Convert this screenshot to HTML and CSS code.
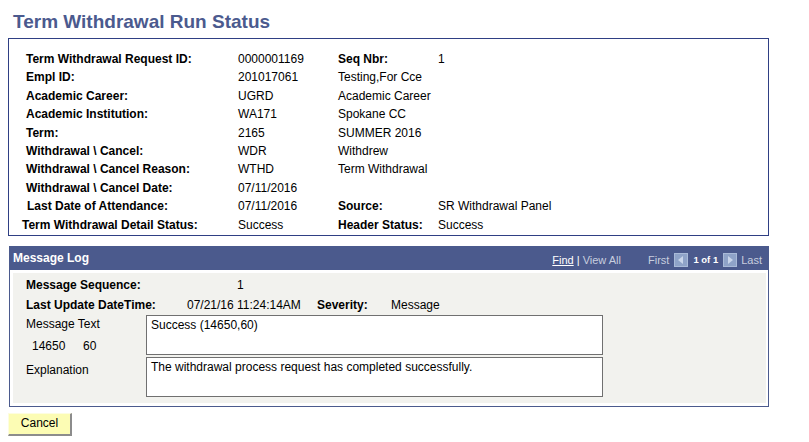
FILE: index.html
```html
<!DOCTYPE html>
<html>
<head>
<meta charset="utf-8">
<title>Term Withdrawal Run Status</title>
<link rel="stylesheet" href="styles.css">
</head>
<body>
<h1 class="title">Term Withdrawal Run Status</h1>

<div class="summary">
  <span class="lbl">Term Withdrawal Request ID:</span><span>0000001169</span><span class="lbl">Seq Nbr:</span><span>1</span>
  <span class="lbl">Empl ID:</span><span>201017061</span><span>Testing,For Cce</span><span></span>
  <span class="lbl">Academic Career:</span><span>UGRD</span><span>Academic Career</span><span></span>
  <span class="lbl">Academic Institution:</span><span>WA171</span><span>Spokane CC</span><span></span>
  <span class="lbl">Term:</span><span>2165</span><span>SUMMER 2016</span><span></span>
  <span class="lbl">Withdrawal \ Cancel:</span><span>WDR</span><span>Withdrew</span><span></span>
  <span class="lbl">Withdrawal \ Cancel Reason:</span><span>WTHD</span><span>Term Withdrawal</span><span></span>
  <span class="lbl">Withdrawal \ Cancel Date:</span><span>07/11/2016</span><span></span><span></span>
  <span class="lbl nudge-r">Last Date of Attendance:</span><span>07/11/2016</span><span class="lbl">Source:</span><span>SR Withdrawal Panel</span>
  <span class="lbl nudge-l">Term Withdrawal Detail Status:</span><span>Success</span><span class="lbl">Header Status:</span><span>Success</span>
</div>

<div class="log">
  <div class="log-head">
    <span class="log-title">Message Log</span>
    <div class="nav">
      <a class="nav-find">Find</a><span class="nav-sep">&nbsp;|&nbsp;</span><span class="nav-dim">View All</span>
      <span class="nav-dim nav-first">First</span>
      <svg class="nav-ico" width="14" height="14" viewBox="0 0 14 14"><rect x="0" y="0" width="14" height="14" fill="#8fa3c8"/><rect x="0.5" y="0.5" width="13" height="13" fill="none" stroke="#a9bad8"/><polygon points="9,3 4,7 9,11" fill="#c9d5ea"/></svg>
      <span class="nav-count">1 of 1</span>
      <svg class="nav-ico" width="14" height="14" viewBox="0 0 14 14"><rect x="0" y="0" width="14" height="14" fill="#8fa3c8"/><rect x="0.5" y="0.5" width="13" height="13" fill="none" stroke="#a9bad8"/><polygon points="5,3 10,7 5,11" fill="#c9d5ea"/></svg>
      <span class="nav-dim nav-last">Last</span>
    </div>
  </div>
  <div class="log-body">
    <div class="log-inner">
      <div class="row-seq">
        <span class="lbl">Message Sequence:</span><span>1</span>
      </div>
      <div class="row-upd">
        <span class="lbl">Last Update DateTime:</span><span>07/21/16 11:24:14AM</span><span class="lbl">Severity:</span><span>Message</span>
      </div>
      <div class="msg-grid">
        <div class="msg-side">
          <div class="side-line">Message Text</div>
          <div class="side-nums"><span class="num1">14650</span><span>60</span></div>
        </div>
        <div class="box">Success (14650,60)</div>
        <div class="msg-side expl">
          <div class="side-line">Explanation</div>
        </div>
        <div class="box">The withdrawal process request has completed successfully.</div>
      </div>
    </div>
  </div>
</div>

<div class="actions">
  <button class="btn" type="button">Cancel</button>
</div>
</body>
</html>
```

FILE: styles.css
```css
html, body {
  background: #ffffff;
}
body {
  margin: 8px;
  font-family: "Liberation Sans", Arial, sans-serif;
  font-size: 12px;
  color: #000000;
}

.title {
  margin: 1px 0 4px 5px;
  font-size: 19px;
  line-height: 25px;
  font-weight: bold;
  color: #4b5a8e;
}

.summary {
  box-sizing: border-box;
  width: 761px;
  border: 1px solid #2f3f84;
  padding: 11px 0 1px 17px;
  display: grid;
  grid-template-columns: 212px 100px 100px 1fr;
  grid-auto-rows: 18.4px;
  line-height: 18.4px;
  white-space: nowrap;
}

.lbl {
  font-weight: bold;
}
.nudge-r { margin-left: 1px; }
.nudge-l { margin-left: -4px; }

.log {
  box-sizing: border-box;
  width: 760px;
  margin: 10px 0 0 1px;
}

.log-head {
  box-sizing: border-box;
  height: 24px;
  background: #4b5a8d;
  display: flex;
  justify-content: space-between;
  align-items: flex-start;
  padding: 1px 7px 0 4px;
  color: #ffffff;
}
.log-title {
  font-weight: bold;
  font-size: 12px;
  line-height: 23px;
}

.nav {
  display: flex;
  align-items: center;
  height: 23px;
  padding-top: 3px;
  box-sizing: border-box;
  font-size: 11px;
  white-space: nowrap;
}
.nav-find {
  color: #ffffff;
  text-decoration: underline;
}
.nav-sep {
  color: #ffffff;
}
.nav-dim {
  color: #c8cedf;
}
.nav-first {
  margin-left: 27px;
}
.nav-ico {
  display: block;
  margin: 0 5px;
}
.nav-count {
  font-weight: bold;
  font-size: 9.5px;
  color: #ffffff;
}
.nav-last {
  margin-left: -1px;
}

.log-body {
  border: 1px solid #4b5a8d;
  border-top: none;
  padding: 3px 2px 3px 3px;
  background: #ffffff;
}
.log-inner {
  background: #f2f2ee;
  padding: 2px 0 6px 13px;
}

.row-seq {
  display: grid;
  grid-template-columns: 211px 1fr;
  height: 21px;
  line-height: 20px;
}
.row-upd {
  display: grid;
  grid-template-columns: 161px 130px 74px 1fr;
  height: 19px;
  line-height: 19px;
  white-space: nowrap;
}

.msg-grid {
  display: grid;
  grid-template-columns: 120px 457px;
  grid-template-rows: 40px 40px;
  row-gap: 2px;
}
.msg-side {
  padding-top: 2px;
}
.msg-side.expl {
  padding-top: 6px;
}
.side-line {
  line-height: 14px;
}
.side-nums {
  margin-top: 8px;
  padding-left: 6px;
  line-height: 14px;
}
.num1 {
  display: inline-block;
  width: 51px;
}
.box {
  box-sizing: border-box;
  border: 1px solid #707070;
  background: #ffffff;
  padding: 2px 4px;
  line-height: 14px;
}

.actions {
  margin-top: 6px;
}
.btn {
  box-sizing: border-box;
  width: 64px;
  height: 23px;
  margin: 0;
  padding: 0;
  font-family: "Liberation Sans", Arial, sans-serif;
  font-size: 12px;
  color: #000000;
  background: #fcfcb4;
  border-style: solid;
  border-width: 1px 2px 2px 1px;
  border-color: #fdfde0 #8c8c8c #8c8c8c #fdfde0;
  line-height: 19px;
}
```
